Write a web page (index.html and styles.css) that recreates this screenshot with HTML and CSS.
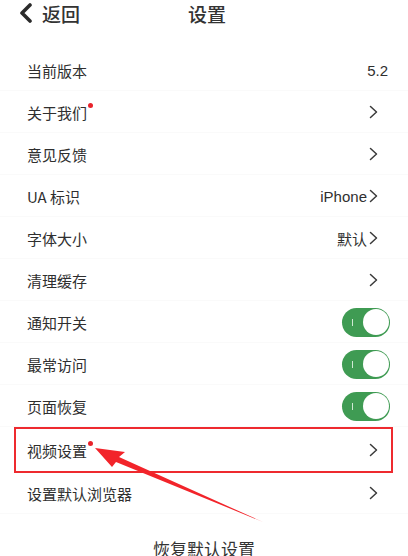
FILE: index.html
```html
<!DOCTYPE html>
<html lang="zh-CN">
<head>
    <meta charset="UTF-8">
    <title>设置</title>
    <link rel="stylesheet" href="styles.css">
</head>
<body>

<div class="page">
    <div class="top-bar">
        <div class="back">
            <svg class="back-icon" width="16" height="20" viewBox="0 0 16 20">
                <path d="M12 2 L4 10 L12 18" fill="none" stroke="#2b2b2b" stroke-width="3.6" stroke-linecap="round" stroke-linejoin="round"/>
            </svg>
            <span>返回</span>
        </div>
        <div class="title">设置</div>
    </div>

    <div class="settings-list">
        <div class="row">
            <span class="label">当前版本</span>
            <span class="value version">5.2</span>
        </div>
        <div class="row">
            <span class="label">关于我们<i class="dot"></i></span>
            <svg class="arrow" width="14" height="14" viewBox="0 0 14 14"><path d="M1.5 1.5 L7.5 7 L1.5 12.5" /></svg>
        </div>
        <div class="row">
            <span class="label">意见反馈</span>
            <svg class="arrow" width="14" height="14" viewBox="0 0 14 14"><path d="M1.5 1.5 L7.5 7 L1.5 12.5" /></svg>
        </div>
        <div class="row">
            <span class="label">UA 标识</span>
            <span class="value">iPhone<svg class="arrow" width="14" height="14" viewBox="0 0 14 14"><path d="M1.5 1.5 L7.5 7 L1.5 12.5" /></svg></span>
        </div>
        <div class="row">
            <span class="label">字体大小</span>
            <span class="value">默认<svg class="arrow" width="14" height="14" viewBox="0 0 14 14"><path d="M1.5 1.5 L7.5 7 L1.5 12.5" /></svg></span>
        </div>
        <div class="row">
            <span class="label">清理缓存</span>
            <svg class="arrow" width="14" height="14" viewBox="0 0 14 14"><path d="M1.5 1.5 L7.5 7 L1.5 12.5" /></svg>
        </div>
        <div class="row">
            <span class="label">通知开关</span>
            <div class="switch"><span class="switch-mark"></span><span class="knob"></span></div>
        </div>
        <div class="row">
            <span class="label">最常访问</span>
            <div class="switch"><span class="switch-mark"></span><span class="knob"></span></div>
        </div>
        <div class="row">
            <span class="label">页面恢复</span>
            <div class="switch"><span class="switch-mark"></span><span class="knob"></span></div>
        </div>
        <div class="row highlighted">
            <span class="label">视频设置<i class="dot"></i></span>
            <svg class="arrow" width="14" height="14" viewBox="0 0 14 14"><path d="M1.5 1.5 L7.5 7 L1.5 12.5" /></svg>
        </div>
        <div class="row">
            <span class="label">设置默认浏览器</span>
            <svg class="arrow" width="14" height="14" viewBox="0 0 14 14"><path d="M1.5 1.5 L7.5 7 L1.5 12.5" /></svg>
        </div>
    </div>

    <div class="reset">恢复默认设置</div>

    <!-- annotation arrow pointing at the video row -->
    <svg class="pointer" width="408" height="556" viewBox="0 0 408 556">
        <polygon points="95,448 125,452 119,457 263,522 116,462 112,467" fill="#f2242a"/>
    </svg>
</div>

</body>
</html>
```

FILE: styles.css
```css
body {
    margin: 0;
    background: #fff;
    font-family: "Noto Sans CJK SC", "Noto Sans", sans-serif;
    color: #333;
}
.page {
    position: relative;
    width: 408px;
    height: 556px;
    overflow: hidden;
}
.top-bar {
    position: relative;
    height: 27px;
    display: flex;
    align-items: center;
    justify-content: center;
}
.back {
    position: absolute;
    left: 18px;
    top: 0;
    height: 27px;
    display: flex;
    align-items: center;
    gap: 8px;
    font-size: 19px;
    font-weight: 500;
    color: #333;
}
.back-icon {
    margin-top: -1px;
}
.title {
    font-size: 19px;
    font-weight: 500;
    color: #333;
    margin-left: 6px;
}
.settings-list {
    margin-top: 22px;
}
.row {
    height: 42px;
    display: flex;
    align-items: center;
    justify-content: space-between;
    padding: 0 19px 0 27px;
    font-size: 15px;
    box-shadow: inset 0 -1px 0 #fafafa;
}
.label {
    position: relative;
    color: #2f2f2f;
}
.dot {
    position: absolute;
    right: -6px;
    top: 1px;
    width: 5px;
    height: 5px;
    border-radius: 50%;
    background: #e8232b;
}
.value {
    display: flex;
    align-items: center;
    color: #2f2f2f;
    font-family: "Liberation Sans", "Noto Sans CJK SC", sans-serif;
    font-size: 15px;
}
.value .arrow {
    margin-left: 2px;
}
.version {
    margin-right: 1px;
}
.arrow {
    flex: none;
    margin-right: 6px;
}
.arrow path {
    fill: none;
    stroke: #3a3a3a;
    stroke-width: 1.5;
    stroke-linecap: round;
    stroke-linejoin: round;
}
.switch {
    position: relative;
    width: 48px;
    height: 29px;
    border-radius: 15px;
    background: #3f9b53;
    margin-right: -1px;
}
.switch-mark {
    position: absolute;
    left: 10px;
    top: 11px;
    width: 1px;
    height: 7px;
    background: #cfe9d4;
}
.knob {
    position: absolute;
    right: 1.5px;
    top: 1.5px;
    width: 26px;
    height: 26px;
    border-radius: 50%;
    background: #fff;
}
.highlighted {
    margin: 1px 16px 0 15px;
    padding: 0 3px 0 12px;
    outline: 2px solid #ee2a2f;
    outline-offset: -1px;
    box-shadow: none;
    height: 44px;
}
.reset {
    text-align: center;
    margin-top: 22px;
    font-size: 17px;
    color: #333;
}
.pointer {
    position: absolute;
    left: 0;
    top: 0;
    pointer-events: none;
}
```
